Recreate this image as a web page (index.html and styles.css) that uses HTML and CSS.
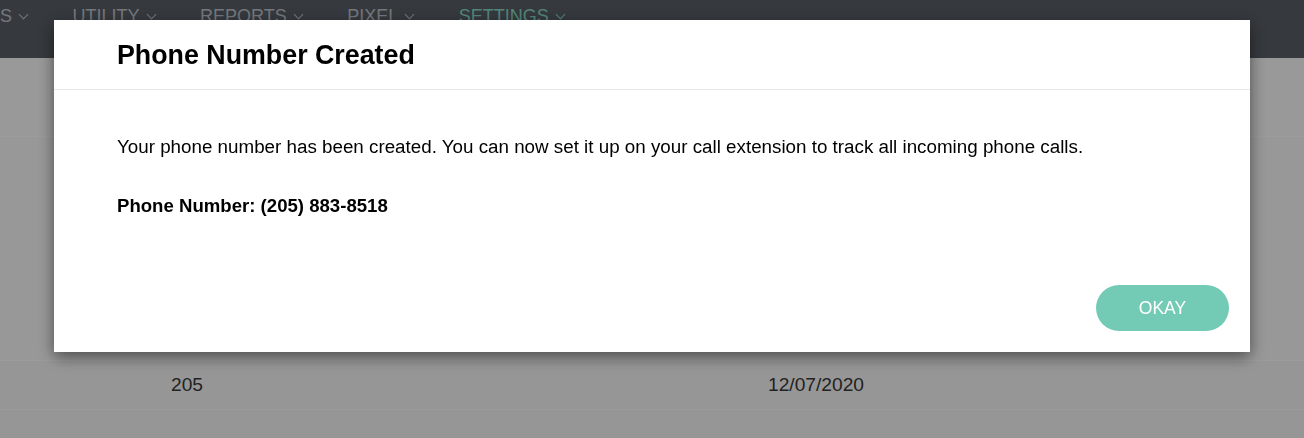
FILE: index.html
```html
<!DOCTYPE html>
<html lang="en">

<head>
    <meta charset="UTF-8">
    <title>Phone Number Created</title>
    <link rel="stylesheet" href="styles.css">
</head>

<body>

    <nav class="top-nav">
        <div class="nav-item">S <span class="caret"></span></div>
        <div class="nav-item">UTILITY <span class="caret"></span></div>
        <div class="nav-item">REPORTS <span class="caret"></span></div>
        <div class="nav-item">PIXEL <span class="caret"></span></div>
        <div class="nav-item active">SETTINGS <span class="caret"></span></div>
    </nav>

    <div class="page">
        <div class="toolbar"></div>
        <div class="table">
            <div class="row row-tall"></div>
            <div class="row">
                <div class="cell cell-area">205</div>
                <div class="cell cell-date">12/07/2020</div>
            </div>
            <div class="row"></div>
        </div>
    </div>

    <!-- modal over the dimmed page -->
    <div class="backdrop"></div>
    <div class="modal">
        <div class="modal-header">
            <h2>Phone Number Created</h2>
        </div>
        <div class="modal-body">
            <p>Your phone number has been created. You can now set it up on your call extension to track all incoming phone calls.</p>
            <p class="phone">Phone Number: (205) 883-8518</p>
        </div>
        <div class="modal-footer">
            <button class="okay-btn">OKAY</button>
        </div>
    </div>

</body>

</html>
```

FILE: styles.css
```css
* {
    box-sizing: border-box;
}

body {
    font-family: 'Liberation Sans', Arial, sans-serif;
    margin: 0;
    padding: 0;
    background-color: #f3f3f3;
    height: 100vh;
    overflow: hidden;
}

.top-nav {
    height: 58px;
    background-color: #575c64;
    display: flex;
    align-items: flex-start;
    gap: 45.5px;
    padding-top: 7px;
}

.nav-item {
    font-size: 18px;
    line-height: 18px;
    color: #bcc1c8;
    display: flex;
    align-items: center;
    gap: 6px;
}

.nav-item.active {
    color: #86d8c4;
}

.caret {
    width: 7px;
    height: 7px;
    border-right: 1.5px solid currentColor;
    border-bottom: 1.5px solid currentColor;
    transform: rotate(45deg);
    margin-top: -4px;
    margin-left: 2px;
}

.toolbar {
    height: 78px;
    background-color: #f7f7f7;
}

.row {
    height: 49px;
    border-top: 1px solid #fcfcfc;
    display: flex;
    align-items: center;
}

.row-tall {
    height: 224px;
    background-color: #f6f6f6;
}

.cell {
    font-size: 19.2px;
    color: #373737;
}

.cell-area {
    margin-left: 171px;
    width: 597px;
}

.backdrop {
    position: fixed;
    inset: 0;
    background-color: rgba(0, 0, 0, 0.38);
}

.modal {
    position: fixed;
    top: 20px;
    left: 54px;
    width: 1196px;
    height: 332px;
    background-color: #ffffff;
    box-shadow: 0 5px 15px rgba(0, 0, 0, 0.5);
    display: flex;
    flex-direction: column;
}

.modal-header {
    height: 70px;
    border-bottom: 1px solid #e8e8e8;
    padding: 0 63px;
    display: flex;
    align-items: center;
}

.modal-header h2 {
    margin: 0;
    margin-top: 2px;
    font-size: 26.8px;
    font-weight: 700;
    color: #000;
}

.modal-body {
    padding: 46px 63px 0;
    flex-grow: 1;
}

.modal-body p {
    margin: 0 0 38px;
    font-size: 18.8px;
    line-height: 21px;
    color: #000;
}

.modal-body .phone {
    font-size: 18.6px;
    font-weight: 700;
}

.modal-footer {
    display: flex;
    justify-content: flex-end;
    padding: 0 21px 21px;
}

.okay-btn {
    width: 133px;
    height: 46px;
    border: none;
    border-radius: 23px;
    background-color: #74cbb5;
    color: #ffffff;
    font-family: 'Liberation Sans', Arial, sans-serif;
    font-size: 17.5px;
    cursor: pointer;
}
```
